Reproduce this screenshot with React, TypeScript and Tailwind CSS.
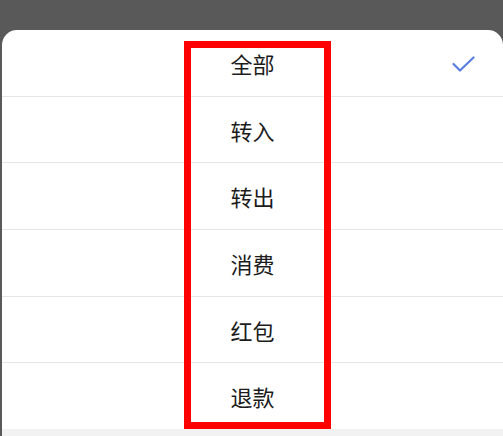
const items = [
  { label: '全部', h: 'h-[67px]', checked: true },
  { label: '转入', h: 'h-[66px]' },
  { label: '转出', h: 'h-[67px]' },
  { label: '消费', h: 'h-[67px]' },
  { label: '红包', h: 'h-[66px]' },
  { label: '退款', h: 'h-[66px]', last: true },
];

function Check() {
  return (
    <svg width="23" height="17" viewBox="0 0 23 17" fill="none">
      <polyline
        points="1.5,8 8,14.5 21.5,1.5"
        stroke="#5b7fe0"
        strokeWidth="2.2"
        strokeLinecap="round"
        strokeLinejoin="round"
      />
    </svg>
  );
}

export default function App() {
  return (
    <div
      className="relative flex h-[436px] w-[503px] flex-col overflow-hidden bg-[#595959] pt-[30px] pl-[2px]"
      style={{ fontFamily: '"Noto Sans CJK SC", "Noto Sans", sans-serif' }}
    >
      <div className="flex flex-1 flex-col overflow-hidden rounded-t-[15px] bg-white">
        {items.map((it) => (
          <div
            key={it.label}
            className={`relative flex ${it.h} shrink-0 items-center justify-center ${it.last ? '' : 'border-b border-[#e6e6e6]'}`}
          >
            <span className="pl-[-2px] text-[22px] leading-none text-[#1c1c1c]">{it.label}</span>
            {it.checked && (
              <div className="absolute right-[28px] top-[26px]">
                <Check />
              </div>
            )}
          </div>
        ))}
        <div className="flex-1 bg-[#f2f2f2]" />
      </div>

      {/* red annotation box */}
      <div className="absolute left-[184px] top-[41px] h-[388px] w-[147px] border-[7px] border-[#ff0000]" />
    </div>
  );
}
